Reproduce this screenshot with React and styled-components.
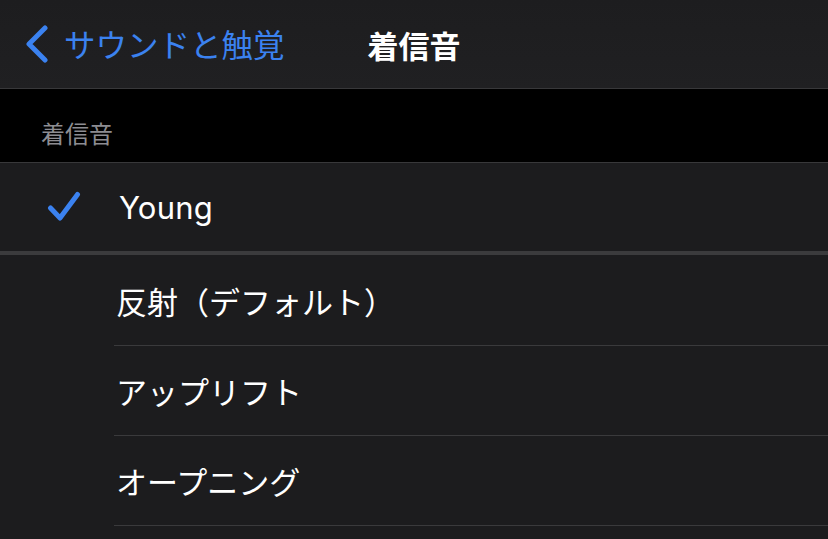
import styled, { createGlobalStyle } from 'styled-components';

const GlobalStyle = createGlobalStyle`
  html, body {
    margin: 0;
    padding: 0;
    background: #000;
  }
  body {
    font-family: "Inter", "Noto Sans CJK JP", sans-serif;
    -webkit-font-smoothing: antialiased;
  }
`;

const Screen = styled.div`
  width: 828px;
  height: 539px;
  overflow: hidden;
  background: #000;
  display: flex;
  flex-direction: column;
`;

const NavBar = styled.header`
  height: 88px;
  flex-shrink: 0;
  display: grid;
  grid-template-columns: 1fr auto 1fr;
  align-items: center;
  background: linear-gradient(180deg, #1d1d1f 0%, #202022 100%);
  border-bottom: 1px solid #38383a;
`;

const BackButton = styled.div`
  display: flex;
  align-items: center;
  gap: 15px;
  padding-left: 25px;
  color: #3b82f0;
  font-family: "Noto Sans CJK JP", sans-serif;
  font-size: 31.5px;
  line-height: 1;
`;

const NavTitle = styled.h1`
  margin: 0;
  color: #fff;
  font-family: "Noto Sans CJK JP", sans-serif;
  font-weight: 700;
  font-size: 31px;
  line-height: 1;
`;

const SectionHeader = styled.div`
  height: 74px;
  flex-shrink: 0;
  display: flex;
  align-items: flex-end;
  box-sizing: border-box;
  padding: 0 0 17px 41px;
  color: #8d8d92;
  font-family: "Noto Sans CJK JP", sans-serif;
  font-size: 24px;
  line-height: 1;
  border-bottom: 1px solid #38383a;
`;

const List = styled.div`
  display: flex;
  flex-direction: column;
  background: #1c1c1e;
  flex: 1;
`;

const SelectedRow = styled.div`
  height: 88px;
  flex-shrink: 0;
  display: flex;
  align-items: center;
  border-bottom: 4px solid #3b3b3d;
`;

const CheckSlot = styled.div`
  width: 119px;
  display: flex;
  justify-content: flex-start;
  padding-left: 47px;
  box-sizing: border-box;
`;

const Row = styled.div`
  height: ${p => (p.first ? '91px' : '90px')};
  flex-shrink: 0;
  margin-left: 114px;
  display: flex;
  align-items: center;
  border-bottom: 1px solid #3a3a3c;
  box-sizing: border-box;
`;

const Label = styled.span`
  color: #fff;
  font-size: 31px;
  font-family: ${p => (p.latin ? '"Inter", sans-serif' : '"Noto Sans CJK JP", sans-serif')};
  line-height: 1;
  padding-left: ${p => (p.latin ? '0' : '2px')};
  letter-spacing: ${p => (p.latin ? '0.2px' : '0')};
`;

const Chevron = () => (
  <svg width="24" height="38" viewBox="0 0 24 38" fill="none">
    <path d="M20 3 L4 19 L20 35" stroke="#3b82f0" strokeWidth="5" strokeLinecap="round" strokeLinejoin="round" />
  </svg>
);

const Check = () => (
  <svg width="34" height="32" viewBox="0 0 34 32" fill="none">
    <path d="M3.5 17 L13 27 L30.5 3.5" stroke="#3b82f0" strokeWidth="5" strokeLinecap="round" strokeLinejoin="round" />
  </svg>
);

const tones = ['反射（デフォルト）', 'アップリフト', 'オープニング'];

export default function App() {
  return (
    <Screen>
      <GlobalStyle />
      <NavBar>
        <BackButton>
          <Chevron />
          <span>サウンドと触覚</span>
        </BackButton>
        <NavTitle>着信音</NavTitle>
        <div />
      </NavBar>
      <SectionHeader>着信音</SectionHeader>
      <List>
        <SelectedRow>
          <CheckSlot>
            <Check />
          </CheckSlot>
          <Label latin>Young</Label>
        </SelectedRow>
        {tones.map((t, i) => (
          <Row key={t} first={i === 0}>
            <Label>{t}</Label>
          </Row>
        ))}
      </List>
    </Screen>
  );
}
